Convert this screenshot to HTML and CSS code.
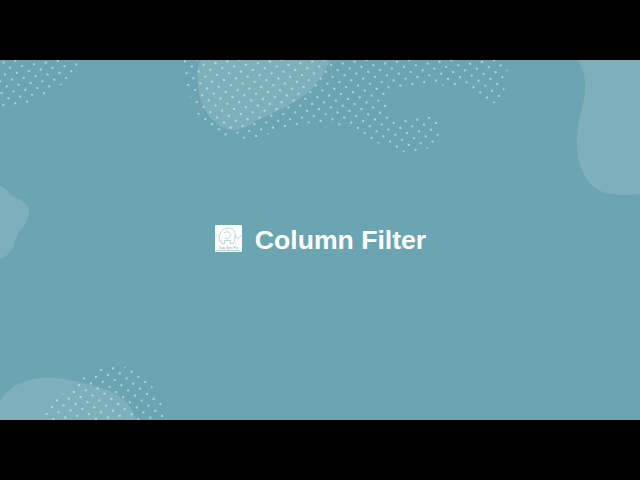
FILE: index.html
```html
<!DOCTYPE html>
<html lang="en">
<head>
<meta charset="UTF-8" />
<meta name="viewport" content="width=device-width, initial-scale=1.0"/>
<title>Column Filter</title>
<link rel="stylesheet" href="styles.css">
</head>
<body>

<section class="stage">
  <!-- Background blobs and dot fields -->
  <svg class="stage__bg" viewBox="0 0 640 360" aria-hidden="true">
    <defs>
      <pattern id="dots" width="12" height="12" patternUnits="userSpaceOnUse" patternTransform="rotate(-8)">
        <circle cx="3" cy="3" r="0.9"/>
        <circle cx="9" cy="9" r="0.9"/>
      </pattern>
    </defs>
    <g class="blob">
      <path d="M578 0 C584 10 586 20 585 32 C583 50 577 60 577 82 C577 110 588 128 606 133 C618 136 630 135 640 134 V0 Z"/>
      <path d="M0 126 C4 127 7 131 11 135 C17 139 24 139 28 147 C31 155 27 163 20 170 C15 178 15 186 10 192 C7 196 3 198 0 199 Z"/>
      <path d="M0 342 C6 328 22 320 42 318 C60 317 80 322 98 327 C115 331 130 340 136 360 H0 Z"/>
      <path d="M200 0 C197 10 197 22 199 32 C202 50 216 70 233 70 C245 70 252 62 262 58 C280 50 296 42 306 34 C318 24 325 12 330 0 Z"/>
    </g>
    <g fill="url(#dots)">
      <path d="M0 0 H83 C76 14 62 26 44 36 C30 44 14 49 0 50 Z"/>
      <path d="M180 0 C184 12 187 28 193 44 C198 58 208 72 225 77 C242 81 262 78 285 68 C305 62 330 60 352 70 C368 76 385 90 408 93 C428 93 438 84 441 68 C442 60 438 54 430 54 C418 54 410 60 402 60 C394 58 388 48 383 38 C386 30 392 28 402 27 C420 25 445 24 468 28 C478 32 484 42 498 44 C505 34 508 14 508 0 Z"/>
      <path d="M36 360 C44 346 58 338 70 328 C84 316 98 306 114 306 C132 305 146 316 156 332 C162 342 164 352 164 360 Z"/>
    </g>
  </svg>

  <div class="title">
    <svg class="title__logo" viewBox="0 0 27 27" role="img" aria-label="Logo">
      <rect width="27" height="27" rx="1" fill="#fff"/>
      <!-- Elephant: back and trunk, ear, legs -->
      <path class="title__elephant" d="M4.3 17 C3.5 10 6 3.6 12 3.3 C16.5 3 19.5 4.6 20 8 C20.3 11 21 13.5 22.5 13.5 C24 13.5 25.2 12 25.7 10"/>
      <path class="title__elephant" d="M9 8 C11 6 15 6.5 15.5 9.5 C15.8 12.5 13 14.5 10 13.5"/>
      <path class="title__elephant" d="M20 10.5 C20 14 19.5 16.5 18.5 18.5 H15.5 V15.5 H9.5 V18.5 H6.5 C6 17 6 15.5 6.5 14"/>
      <text class="title__logotext" x="13.5" y="23.5" text-anchor="middle">Data Sync Pro</text>
      <rect x="1.5" y="25" width="24" height=".6" fill="#8fb8c1"/>
    </svg>
    <h1 class="title__text">Column Filter</h1>
  </div>
</section>

</body>
</html>
```

FILE: styles.css
```css
html, body {
  height: 100%;
}

body {
  margin: 0;
  background: #000;
  display: flex;
  align-items: center;
  font-family: "Liberation Sans", Arial, sans-serif;
}

.stage {
  position: relative;
  width: 640px;
  height: 360px;
  background: #6ba5b2;
  overflow: hidden;
  display: flex;
  align-items: center;
  justify-content: center;
}

.stage__bg {
  position: absolute;
  top: 0;
  left: 0;
  width: 100%;
  height: 100%;
}

.blob {
  fill: #fff;
  fill-opacity: .13;
}

#dots circle {
  fill: #d9f1f5;
  fill-opacity: .9;
}

.title {
  position: relative;
  display: flex;
  align-items: center;
  gap: 13px;
  padding-left: 1px;
}

.title__logo {
  width: 27px;
  height: 27px;
  display: block;
  margin-bottom: 3px;
}

.title__elephant {
  fill: none;
  stroke: #9fc3cb;
  stroke-width: .7;
}

.title__logotext {
  font-size: 3px;
  fill: #7fa6b0;
}

.title__text {
  margin: 0;
  font-size: 26.6px;
  font-weight: 700;
  line-height: 1;
  color: #fff;
}
```
